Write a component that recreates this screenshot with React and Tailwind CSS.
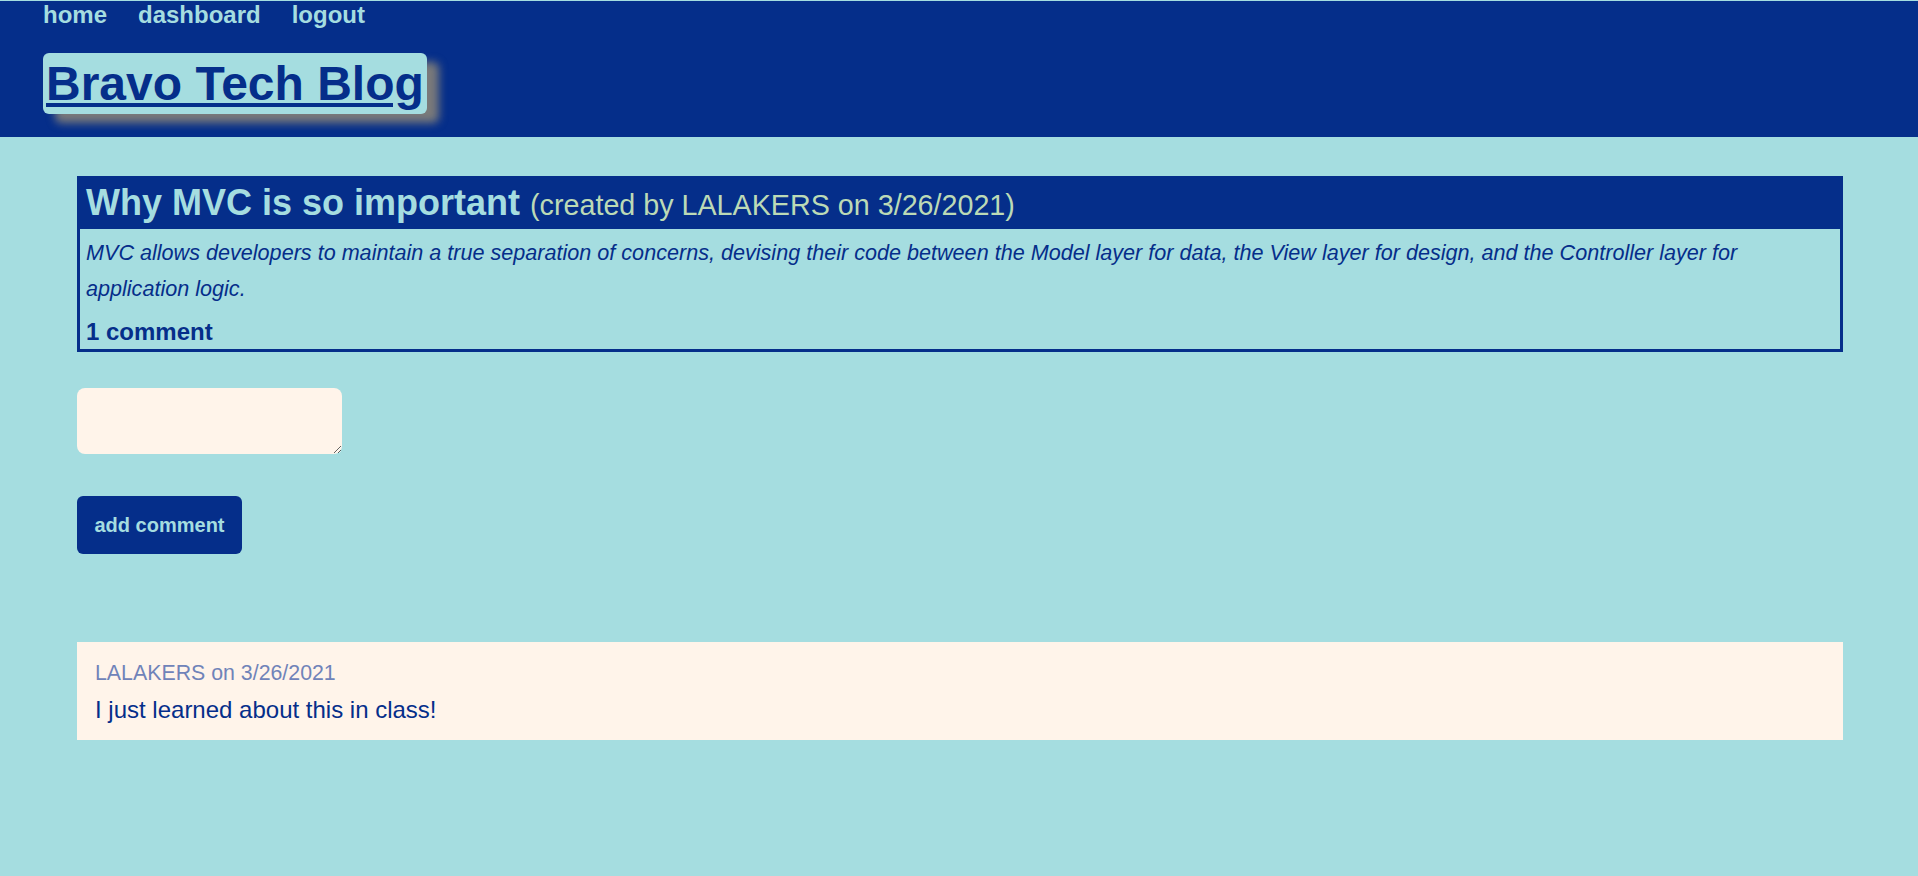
import React from 'react';

const post = {
  title: 'Why MVC is so important',
  author: 'LALAKERS',
  date: '3/26/2021',
  body: 'MVC allows developers to maintain a true separation of concerns, devising their code between the Model layer for data, the View layer for design, and the Controller layer for application logic.',
};

const comments = [
  { author: 'LALAKERS', date: '3/26/2021', text: 'I just learned about this in class!' },
];

export default function App() {
  return (
    <div className="min-h-screen bg-[#a5dde0] font-['Liberation_Sans',Arial,sans-serif] pb-[40px]">
      {/* Top bar */}
      <header className="h-[137px] bg-[#052e8a] border-t border-[#a5dde0]">
        <nav className="flex gap-[31px] pl-[43px] text-[24px] leading-[27px] font-bold text-[#a5dde0]">
          <a href="#">home</a>
          <a href="#">dashboard</a>
          <a href="#">logout</a>
        </nav>
        <div className="pl-[43px] mt-[25px]">
          <a
            href="#"
            className="inline-block bg-[#a5dde0] rounded-[6px] px-[3px] text-[48px] leading-[61px] font-bold underline text-[#052e8a] shadow-[12px_9px_9px_#7a7a7a]"
          >
            Bravo Tech Blog
          </a>
        </div>
      </header>

      <main className="ml-[77px] mr-[75px]">
        {/* Post */}
        <article className="mt-[39px] border-[3px] border-[#052e8a]">
          <div className="bg-[#052e8a] px-[6px] pt-[3px] pb-[6px]">
            <h2 className="text-[36px] leading-[41px] font-bold text-[#a5dde0]">
              {post.title}{' '}
              <span className="text-[28.7px] leading-none font-normal text-[#bcdab6]">
                (created by {post.author} on {post.date})
              </span>
            </h2>
          </div>
          <div className="px-[6px] pt-[6px] pb-[4px] text-[#052e8a]">
            <p className="text-[21.6px] leading-[36px] italic">{post.body}</p>
            <p className="mt-[11px] text-[24px] leading-[27px] font-bold">1 comment</p>
          </div>
        </article>

        {/* New comment */}
        <form className="flex flex-col items-start" onSubmit={e => e.preventDefault()}>
          <textarea className="block mt-[36px] w-[265px] h-[66px] rounded-[8px] bg-[#fff4ea] outline-none" />
          <button
            type="submit"
            className="mt-[42px] w-[165px] h-[58px] rounded-[6px] bg-[#052e8a] text-[20px] font-bold text-[#a5dde0]"
          >
            add comment
          </button>
        </form>

        {/* Comments */}
        {comments.map((c, i) => (
          <div key={i} className="mt-[88px] bg-[#fff4ea] px-[18px] pt-[19px] pb-[17px]">
            <p className="text-[21.33px] leading-[24.5px] text-[#7083b9]">
              {c.author} on {c.date}
            </p>
            <p className="mt-[10px] text-[24px] leading-[27.6px] text-[#052e8a]">{c.text}</p>
          </div>
        ))}
      </main>
    </div>
  );
}
